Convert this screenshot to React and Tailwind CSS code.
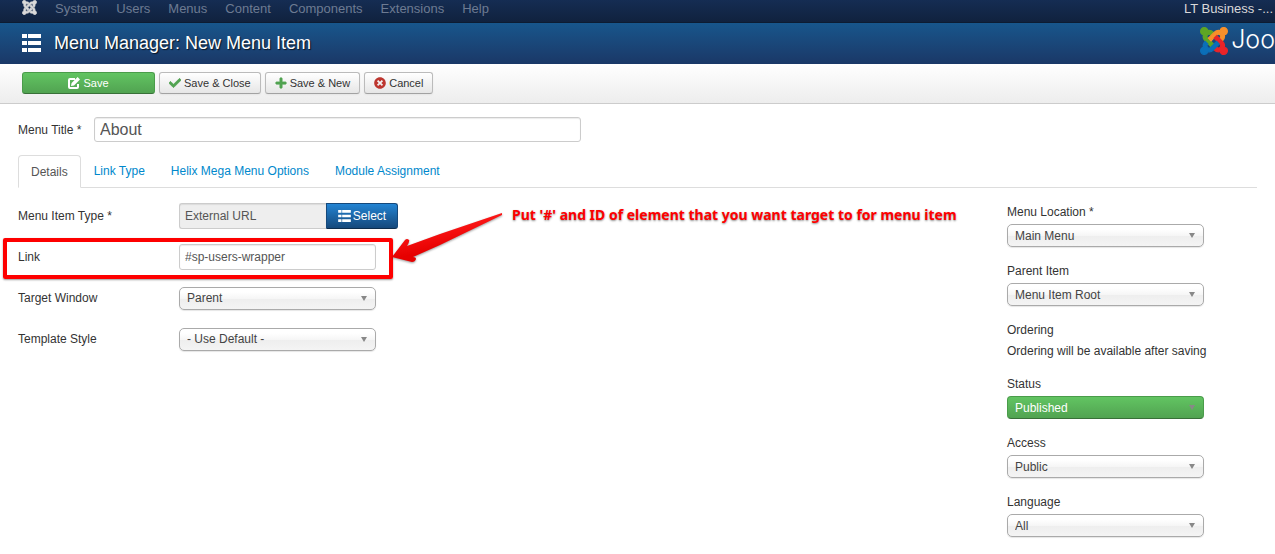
import { useState } from 'react';
import { FaCheck, FaPlus, FaTimesCircle } from 'react-icons/fa';

const navItems = ['System', 'Users', 'Menus', 'Content', 'Components', 'Extensions', 'Help'];
const tabs = ['Details', 'Link Type', 'Helix Mega Menu Options', 'Module Assignment'];

const logoParts = [
  { color: '#5fa624', d: 'M.6 92.1C.6 58.8 27.4 32 60.4 32c30 0 54.5 21.9 59.2 50.2 32.6-7.6 67.1.6 96.5 30l-44.3 44.3c-20.5-20.5-42.6-16.3-55.4-3.5-14.3 14.3-14.3 37.9 0 52.2l99.5 99.5-44 44.3c-87.7-87.2-49.7-49.7-99.8-99.7-26.8-26.5-35-64.8-24.8-98.9C20.4 144.6.6 120.7.6 92.1z' },
  { color: '#f8902a', d: 'M130.1 208.5l44.3 44.3c10-10 89.7-89.7 99.7-99.8 14.3-14.3 37.6-14.3 51.9 0 12.8 12.8 17 35-3.5 55.4l44 44.3c31.2-31.2 38.5-67.6 28.9-101.2 29.2-4.1 51.9-29.2 51.9-59.5 0-33.2-26.8-60.1-59.8-60.1-30.3 0-55.4 22.5-59.5 51.6-33.8-9.9-71.7-1.5-98.3 25.1-18.3 19.1-71.1 71.5-99.6 99.9z' },
  { color: '#ea2428', d: 'M396.4 360.7c8.2-32.7-.9-68.5-26.3-93.9-11.8-12.2 5 4.7-99.5-99.7l-44.3 44.3 99.7 99.7c14.3 14.3 14.3 37.6 0 51.9-12.8 12.8-35 17-55.4-3.5l-44 44.3c27.6 30.2 68 38.8 102.7 28 5.5 27.4 29.7 48.1 58.9 48.1 33 0 59.8-26.8 59.8-60.1 0-30.2-22.5-55-51.6-59.1z' },
  { color: '#0b6fb8', d: 'M312.1 307.6l-44-44.3c-87 86.4-50.4 50.4-99.7 99.8-14.3 14.3-37.6 14.3-51.9 0-13.1-13.4-16.9-35.3 3.2-55.4l-44-44.3c-30.2 30.2-38 65.2-29.5 98.3-26.7 6-46.2 29.9-46.2 58.2C0 453.2 26.8 480 59.8 480c28.6 0 52.5-19.8 58.6-46.7 32.7 8.2 68.5-.6 94.2-26 32.1-32 12.2-12.4 99.5-99.7z' },
];

const JoomlaMark = ({ size, mono }) => (
  <svg
    width={size}
    height={size}
    viewBox="-10 22 468 468"
    className="shrink-0"
    aria-hidden="true"
  >
    {logoParts.map(part => (
      <path key={part.color} d={part.d} fill={mono || part.color} stroke={mono || part.color} strokeWidth="20" />
    ))}
  </svg>
);

const ListIcon = ({ className }) => (
  <svg viewBox="0 0 19 18" className={className} fill="currentColor" aria-hidden="true">
    <path d="M0 0h5v4H0zM6 0h13v4H6zM0 7h5v4H0zM6 7h13v4H6zM0 14h5v4H0zM6 14h13v4H6z" />
  </svg>
);

const EditIcon = () => (
  <svg viewBox="0 0 12 12" className="h-[12px] w-[12px]" aria-hidden="true">
    <path d="M7 2H2Q1 2 1 3v7q0 1 1 1h7q1 0 1-1V7" fill="none" stroke="currentColor" strokeWidth="2" />
    <path d="M9.600 0 12 2.400 6 8.400 3 9 3.600 6z" fill="currentColor" />
  </svg>
);

const ToolbarButton = ({ icon, children }) => (
  <button
    type="button"
    className="flex h-[22px] items-center gap-[3px] rounded-[3px] border border-[#bbb] border-b-[#a2a2a2] bg-linear-to-b from-white to-[#e6e6e6] px-[9px] text-[11px] text-[#333] shadow-xs"
  >
    {icon}
    {children}
  </button>
);

const Select = ({ id, value, success }) => (
  <div className="relative w-[197px]">
    <select
      id={id}
      defaultValue={value}
      className={
        success
          ? 'block h-[23px] w-full appearance-none rounded-[4px] border border-[#4a9c4a] border-b-[#387038] bg-linear-to-b from-[#62c462] to-[#51a351] px-[7px] text-[12px] text-white'
          : 'block h-[23px] w-full appearance-none rounded-[5px] border border-[#aaa] bg-[linear-gradient(#fff_20%,#f6f6f6_50%,#eee_52%,#f4f4f4_100%)] px-[7px] text-[12px] text-[#444] shadow-[0_1px_1px_rgba(0,0,0,0.1)]'
      }
    >
      <option>{value}</option>
    </select>
    <svg viewBox="0 0 6 5" className="pointer-events-none absolute top-[9px] right-[9px] h-[5px] w-[6px]" aria-hidden="true">
      <path d="M0 0h6L3 5z" fill="#888" />
    </svg>
  </div>
);

const FormRow = ({ id, label, children }) => (
  <div className="relative flex h-[26px] items-center">
    <label htmlFor={id} className="w-[161px] shrink-0">{label}</label>
    {children}
  </div>
);

const SideField = ({ id, label, value, success }) => (
  <div>
    <label htmlFor={id} className="mb-[3px] block leading-[18px]">{label}</label>
    <Select id={id} value={value} success={success} />
  </div>
);

// Red frame, arrow and hint drawn over the Link row
const LinkCallout = () => (
  <div className="pointer-events-none">
    <div className="absolute -top-[6px] -left-[15px] h-[41px] w-[390px] rounded-[2px] border-4 border-[#fe0000] shadow-[0_1px_2px_rgba(0,0,0,0.4)]"></div>
    <svg viewBox="0 0 120 60" className="absolute -top-[37px] left-[370px] h-[60px] w-[120px] drop-shadow-[0_1px_1px_rgba(0,0,0,0.4)]" aria-hidden="true">
      <defs>
        <linearGradient id="arrow" x1="0" y1="0" x2="0.4" y2="1">
          <stop offset="0.3" stopColor="#ff1a1a" />
          <stop offset="0.8" stopColor="#e60000" />
        </linearGradient>
      </defs>
      <path d="M114 6V8L52 38 25 50Q28 50 28 52 27 55 24 55L4 50 17 33Q19 31 21 33 22 34 19 39L52 27Z" fill="url(#arrow)" />
    </svg>
    <p className="absolute -top-[39px] left-[494px] font-['Noto_Sans',sans-serif] text-[14px] leading-[20px] font-bold whitespace-nowrap text-[#fe0000] [text-shadow:0_1px_2px_rgba(0,0,0,0.45)]">
      Put '#' and ID of element that you want target to for menu item
    </p>
  </div>
);

const App = () => {
  const [title, setTitle] = useState('About');
  const [link, setLink] = useState('#sp-users-wrapper');
  const [activeTab, setActiveTab] = useState('Details');

  return (
    <div className="min-h-screen overflow-x-hidden bg-white font-['Liberation_Sans',Arial,sans-serif] text-[12px] text-[#333]">
      {/* Top navigation */}
      <nav className="flex h-[23px] items-start justify-between overflow-hidden border-b border-[#0d1c32] bg-linear-to-b from-[#152d53] to-[#10223e] pr-[2px] pl-[22px] text-[13px] leading-[18px]">
        <div className="flex">
          <a href="#" aria-label="Control panel" className="mr-[9px]">
            <JoomlaMark size={15} mono="#d9d9d9" />
          </a>
          {navItems.map(item => (
            <a key={item} href="#" className="px-[9px] text-[#6d7b92]">{item}</a>
          ))}
        </div>
        <a href="#" className="text-[#d9d9d9]">LT Business -...</a>
      </nav>

      {/* Header */}
      <header className="flex h-[41px] items-center justify-between overflow-hidden bg-linear-to-b from-[#17568c] to-[#1a3867] pl-[22px] text-white">
        <div className="flex items-center gap-[13px] pb-[2px]">
          <ListIcon className="h-[18px] w-[19px]" />
          <h1 className="text-[18px] leading-[24px] [text-shadow:1px_1px_1px_rgba(0,0,0,0.7)]">Menu Manager: New Menu Item</h1>
        </div>
        <div className="flex items-start gap-[3px] pb-[6px]">
          <JoomlaMark size={28} />
          <span className="font-['Inter',sans-serif] text-[25px] leading-[24px] font-light">Joo</span>
        </div>
      </header>

      {/* Toolbar */}
      <div className="flex gap-1 border-b border-[#ccc] bg-linear-to-b from-white to-[#ededed] px-[22px] pt-2 pb-[9px]">
        <button
          type="button"
          className="flex h-[22px] w-[133px] items-center justify-center gap-[3px] rounded-[3px] border border-[#4a9c4a] border-b-[#387038] bg-linear-to-b from-[#62c462] to-[#51a351] text-[11px] text-white"
        >
          <EditIcon />
          Save
        </button>
        <ToolbarButton icon={<FaCheck size={12} color="#51a351" stroke="#51a351" strokeWidth={30} />}>Save &amp; Close</ToolbarButton>
        <ToolbarButton icon={<FaPlus size={12} color="#51a351" stroke="#51a351" strokeWidth={30} />}>Save &amp; New</ToolbarButton>
        <ToolbarButton icon={<FaTimesCircle size={12} color="#bd362f" />}>Cancel</ToolbarButton>
      </div>

      <main className="px-[18px] pt-[13px]">
        <div className="flex items-center">
          <label htmlFor="title" className="w-[76px] shrink-0">Menu Title *</label>
          <input
            id="title"
            type="text"
            value={title}
            onChange={(e) => setTitle(e.target.value)}
            className="h-[25px] w-[487px] rounded-[3px] border border-[#ccc] px-[5px] text-[16px] text-[#555] shadow-[inset_0_1px_1px_rgba(0,0,0,0.08)]"
          />
        </div>

        <div role="tablist" className="mt-[13px] flex border-b border-[#ddd]">
          {tabs.map(tab => (
            <button
              key={tab}
              type="button"
              role="tab"
              aria-selected={tab === activeTab}
              onClick={() => setActiveTab(tab)}
              className={
                tab === activeTab
                  ? '-mb-px h-[33px] rounded-t-[4px] border border-[#ddd] border-b-white bg-white px-[12px] text-[#555]'
                  : 'h-[32px] border border-transparent px-[12px] text-[#08c]'
              }
            >
              {tab}
            </button>
          ))}
        </div>

        <div className="flex justify-between pt-[15px]">
          <div className="flex grow flex-col gap-[15px]">
            <FormRow id="type" label="Menu Item Type *">
              <input
                id="type"
                type="text"
                readOnly
                value="External URL"
                className="h-[26px] w-[147px] rounded-l-[3px] border border-r-0 border-[#ccc] bg-[#eee] px-[5px] text-[#555] shadow-[inset_0_1px_1px_rgba(0,0,0,0.08)]"
              />
              <button
                type="button"
                className="flex h-[26px] w-[72px] items-center justify-center gap-[2px] rounded-r-[3px] border border-[#15497c] border-b-[#0d2d4d] bg-linear-to-b from-[#2384d3] to-[#15497c] text-white"
              >
                <ListIcon className="h-[12px] w-[13px]" />
                Select
              </button>
            </FormRow>
            <FormRow id="link" label="Link">
              <input
                id="link"
                type="text"
                value={link}
                onChange={(e) => setLink(e.target.value)}
                className="h-[26px] w-[197px] rounded-[3px] border border-[#ccc] px-[5px] text-[#555] shadow-[inset_0_1px_1px_rgba(0,0,0,0.08)]"
              />
              <LinkCallout />
            </FormRow>
            <FormRow id="target" label="Target Window">
              <Select id="target" value="Parent" />
            </FormRow>
            <FormRow id="style" label="Template Style">
              <Select id="style" value="- Use Default -" />
            </FormRow>
          </div>

          {/* Side options */}
          <aside className="flex w-[250px] shrink-0 flex-col gap-[15px]">
            <SideField id="location" label="Menu Location *" value="Main Menu" />
            <SideField id="parent" label="Parent Item" value="Menu Item Root" />
            <div className="leading-[18px]">
              <p className="mb-[3px]">Ordering</p>
              <p>Ordering will be available after saving</p>
            </div>
            <SideField id="status" label="Status" value="Published" success />
            <SideField id="access" label="Access" value="Public" />
            <SideField id="language" label="Language" value="All" />
          </aside>
        </div>
      </main>
    </div>
  );
};

export default App;
